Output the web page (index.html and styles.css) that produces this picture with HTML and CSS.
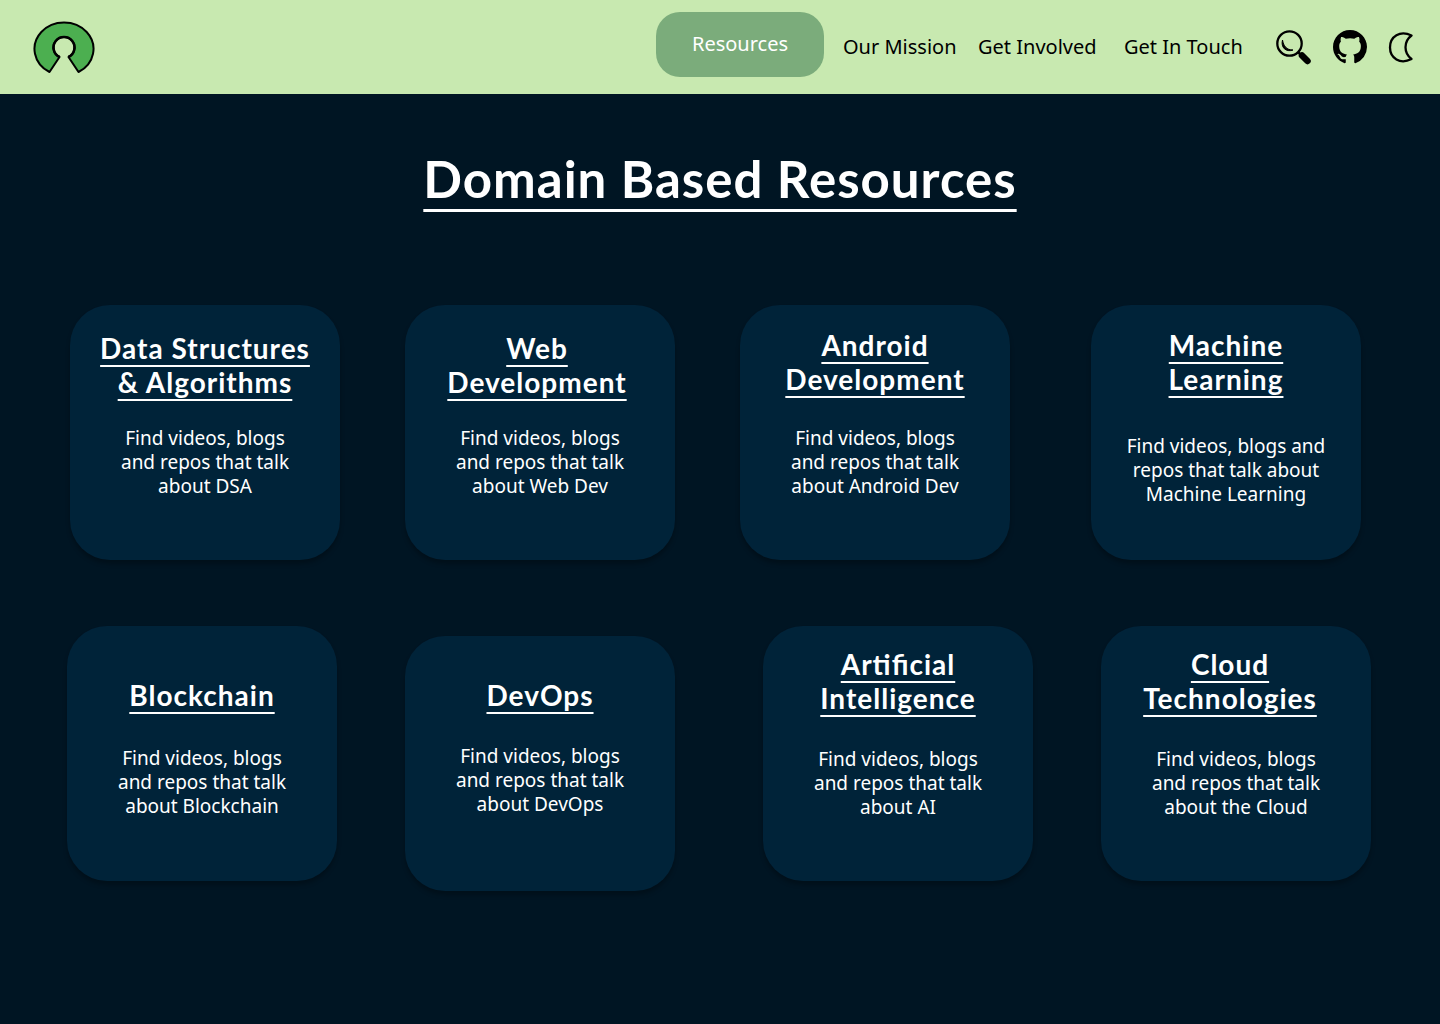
FILE: index.html
```html
<!DOCTYPE html>
<html lang="en">
<head>
<meta charset="utf-8">
<meta name="viewport" content="width=device-width, initial-scale=1">
<title>Domain Based Resources</title>
<link rel="stylesheet" href="styles.css">
</head>
<body>
<header class="topbar">
  <a class="logo" href="#" aria-label="Home">
    <svg width="62" height="54" viewBox="0 0 62 54" aria-hidden="true">
      <path d="M16.500 52 A29.500 26.500 0 1 1 45.500 52 L35.500 37 A10.500 10.500 0 1 0 26.500 37 Z" fill="#4caf50" stroke="#000" stroke-width="2" stroke-linejoin="round"/>
      <path d="M26.500 37 A10.500 10.500 0 1 1 35.500 37" fill="none" stroke="#000" stroke-width="2.500"/>
    </svg>
  </a>
  <nav class="nav">
    <a class="nav-link nav-current" href="#" aria-current="page">Resources</a>
    <a class="nav-link" href="#">Our Mission</a>
    <a class="nav-link nav-involved" href="#">Get Involved</a>
    <a class="nav-link nav-touch" href="#">Get In Touch</a>
  </nav>
  <div class="tools">
    <button class="tool" type="button" aria-label="Search">
      <svg width="36" height="36" viewBox="0 0 36 36" aria-hidden="true">
        <circle cx="13.500" cy="14.500" r="12.200" fill="none" stroke="#000" stroke-width="2.300"/>
        <path d="M6.500 11 C4.500 18.500 10 23.500 17 21 C10.500 21 7.500 17 6.500 11Z" stroke="#000" stroke-width="1"/>
        <path d="M22 23 L25 26" stroke="#000" stroke-width="2.500"/>
        <path d="M26 26.500 L31.500 32" stroke="#000" stroke-width="6.500" stroke-linecap="round"/>
      </svg>
    </button>
    <a class="tool" href="#" aria-label="GitHub">
      <svg width="34" height="34" viewBox="0 0 16 16" aria-hidden="true">
        <path d="M8 0C3.580 0 0 3.580 0 8c0 3.540 2.290 6.530 5.470 7.590.4.070.55-.17.55-.38 0-.19-.01-.82-.01-1.490-2.010.37-2.530-.49-2.690-.94-.09-.23-.48-.94-.82-1.130-.28-.15-.68-.52-.01-.53.63-.01 1.080.58 1.230.82.72 1.210 1.870.87 2.330.66.07-.52.28-.87.51-1.070-1.780-.2-3.640-.89-3.640-3.950 0-.87.31-1.590.82-2.150-.08-.2-.36-1.020.08-2.120 0 0 .67-.21 2.200.82.64-.18 1.320-.27 2-.27s1.360.09 2 .27c1.530-1.040 2.200-.82 2.200-.82.44 1.100.16 1.920.08 2.120.51.56.82 1.270.82 2.150 0 3.070-1.870 3.750-3.650 3.950.29.25.54.73.54 1.480 0 1.070-.01 1.930-.01 2.200 0 .21.15.46.55.38A8.010 8.010 0 0 0 16 8c0-4.420-3.580-8-8-8Z"/>
      </svg>
    </a>
    <button class="tool" type="button" aria-label="Dark mode">
      <svg width="26" height="32" viewBox="0 0 26 32" aria-hidden="true">
        <path d="M23.500 4.500 C12 -1 2 5.500 2 16.500 C2 27 12 34 23.500 28 C15.500 22 15.500 10.500 23.500 4.500Z" fill="none" stroke="#000" stroke-width="2.300" stroke-linejoin="round"/>
      </svg>
    </button>
  </div>
</header>
<main>
  <h1 class="title">Domain Based Resources</h1>
  <section class="row row-first">
    <article class="card">
      <h2 class="card-title">Data Structures<br>&amp; Algorithms</h2>
      <p class="card-text">Find videos, blogs<br>and repos that talk<br>about DSA</p>
    </article>
    <article class="card">
      <h2 class="card-title title-left">Web<br>Development</h2>
      <p class="card-text">Find videos, blogs<br>and repos that talk<br>about Web Dev</p>
    </article>
    <article class="card card-high">
      <h2 class="card-title">Android<br>Development</h2>
      <p class="card-text">Find videos, blogs<br>and repos that talk<br>about Android Dev</p>
    </article>
    <article class="card card-high card-spread">
      <h2 class="card-title">Machine<br>Learning</h2>
      <p class="card-text">Find videos, blogs and<br>repos that talk about<br>Machine Learning</p>
    </article>
  </section>
  <section class="row row-second">
    <article class="card card-single">
      <h2 class="card-title">Blockchain</h2>
      <p class="card-text">Find videos, blogs<br>and repos that talk<br>about Blockchain</p>
    </article>
    <article class="card card-single card-lower">
      <h2 class="card-title">DevOps</h2>
      <p class="card-text">Find videos, blogs<br>and repos that talk<br>about DevOps</p>
    </article>
    <article class="card card-top">
      <h2 class="card-title">Artificial<br>Intelligence</h2>
      <p class="card-text">Find videos, blogs<br>and repos that talk<br>about AI</p>
    </article>
    <article class="card card-top">
      <h2 class="card-title title-far-left">Cloud<br>Technologies</h2>
      <p class="card-text">Find videos, blogs<br>and repos that talk<br>about the Cloud</p>
    </article>
  </section>
</main>
</body>
</html>
```
FILE: styles.css
```css
* { box-sizing: border-box; }
body {
  margin: 0;
  min-height: 100vh;
  background: #001523;
  color: #fff;
  font-family: "Noto Sans", sans-serif;
}
.topbar {
  display: flex;
  align-items: center;
  height: 94px;
  padding: 0 26px 0 33px;
  background: #c8e9b0;
}
.logo { display: block; height: 54px; }
.logo svg, .tool svg { display: block; }
.nav {
  display: flex;
  align-items: center;
  margin-left: auto;
}
.nav-link {
  color: #000;
  font-size: 20px;
  line-height: 28px;
  text-decoration: none;
  white-space: nowrap;
  width: 112px;
}
.nav-current {
  width: 168px;
  margin: 0 19px 5px 0;
  padding: 18px 0 19px;
  border-radius: 24px;
  background: #7bac7b;
  color: #fff;
  text-align: center;
}
.nav-involved { width: 118px; margin-left: 23px; }
.nav-touch { width: 118px; margin-left: 28px; }
.tools {
  display: flex;
  align-items: center;
  gap: 21px;
  margin-left: 34px;
}
.tool { padding: 0; border: 0; background: none; color: #000; cursor: pointer; }
.title {
  margin: 51px 0 0;
  font: bold 51px/68px Lato, sans-serif;
  letter-spacing: 1px;
  text-align: center;
  text-decoration: underline 3px;
  text-underline-offset: 11px;
  text-decoration-skip-ink: none;
}
.row { display: grid; }
.row-first {
  grid-template-columns: 335fr 335fr 351fr 349fr;
  margin-top: 92px;
  padding-left: 70px;
}
.row-second {
  grid-template-columns: 338fr 358fr 338fr 339fr;
  margin-top: 66px;
  padding: 0 0 40px 67px;
}
.card {
  width: 270px;
  min-height: 255px;
  padding-top: 26px;
  border-radius: 40px;
  background: #002339;
  box-shadow: 0 4px 4px rgba(0, 0, 0, 0.25);
  text-align: center;
}
.card-title {
  margin: 0 0 27px;
  font: bold 28px/34px Lato, sans-serif;
  letter-spacing: 1px;
  font-feature-settings: "liga" 1;
  text-decoration: underline 2px;
  text-underline-offset: 6px;
  text-decoration-skip-ink: none;
}
.card-text {
  margin: 0;
  font-size: 19px;
  line-height: 24px;
}
.card-high { padding-top: 23px; }
.card-high .card-title { margin-bottom: 30px; }
.card-spread .card-title { margin-bottom: 38px; }
.card-top { padding-top: 21px; }
.card-top .card-title { margin-bottom: 32px; }
.card-single { padding-top: 52px; }
.card-single .card-title { margin-bottom: 34px; }
.card-lower { margin: 10px 0 -10px; padding-top: 42px; }
.card-lower .card-title { margin-bottom: 32px; }
.title-left { padding-right: 6px; }
.title-far-left { padding-right: 12px; }
```
